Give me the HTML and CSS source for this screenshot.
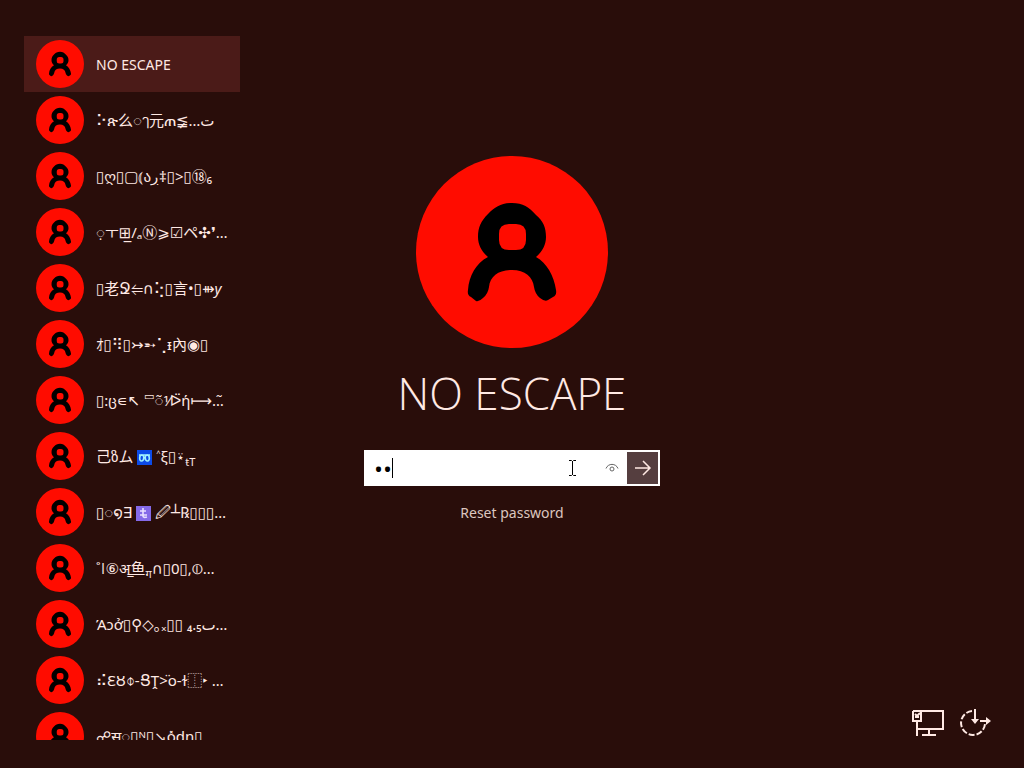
FILE: index.html
```html
<!DOCTYPE html>
<html lang="en">
<head>
    <meta charset="UTF-8">
    <meta name="viewport" content="width=device-width, initial-scale=1.0">
    <title>Sign in</title>
    <link rel="stylesheet" href="styles.css">
</head>
<body>
    <svg class="defs" aria-hidden="true">
        <symbol id="person" viewBox="0 0 192 192">
            <circle cx="96" cy="96" r="96" fill="#ff0c00"/>
            <path fill="#000" fill-rule="evenodd" d="M96 47C85 47 79 51 72 58C65 65 62 71 62 81C62 89 66 96 72 101C60 107 53 120 52 134Q51 139 55 141L60 145Q63 146 67 142Q72 138 73 131C74 120 83 114 96 114C109 114 117 121 118 131Q119 138 124 142Q129 146 132 144L137 141Q141 139 140 134C138 120 131 107 120 101C126 96 130 89 130 81C130 71 127 65 120 59C113 51 107 47 96 47ZM93 68H100Q110 68 110 78V84Q110 94 100 94H93Q83 94 83 84V78Q83 68 93 68Z"/>
        </symbol>
    </svg>

    <div class="screen">
        <nav class="users" aria-label="Users">
            <button class="user selected"><svg class="avatar"><use href="#person"/></svg><span class="name">NO ESCAPE</span></button>
            <button class="user"><svg class="avatar"><use href="#person"/></svg><span class="name glyphs">⠕ጽ么◌ๅ元ጠ≨…<bdi>ت</bdi></span></button>
            <button class="user"><svg class="avatar"><use href="#person"/></svg><span class="name glyphs">▯ღ▯▢⦅ა<bdi>ڔ</bdi>‡▯&gt;▯⑱₆</span></button>
            <button class="user"><svg class="avatar"><use href="#person"/></svg><span class="name glyphs">◌̣ㅜ⊞̲/ₐⓃ⩾☑ペ✣❜…</span></button>
            <button class="user"><svg class="avatar"><use href="#person"/></svg><span class="name glyphs">▯老Ջ⥢∩⢕▯言•▯⇻<i>y</i></span></button>
            <button class="user"><svg class="avatar"><use href="#person"/></svg><span class="name glyphs">ｵ▯⠻▯↣➵⢁ᵻ內◉▯</span></button>
            <button class="user"><svg class="avatar"><use href="#person"/></svg><span class="name glyphs">▯:ც∊↖ <sup>▭</sup>◌̃⅟ᐅ̈ή⟼…̃</span></button>
            <button class="user"><svg class="avatar"><use href="#person"/></svg><span class="name glyphs">己ზム <svg class="tile" viewBox="0 0 15 15"><path fill="#0c4be8" d="M0 0H15V15H0Z"/><path fill="none" stroke="#9ff1ff" stroke-width="1.6" d="M2 5H4.500C8 5 7 11 4.500 11C2 11 2 5 5 5H10C13 5 13 11 10.500 11C8 11 7 5 10.500 5H13"/></svg> ˄ξ▯⍣<sub>ŧT</sub></span></button>
            <button class="user"><svg class="avatar"><use href="#person"/></svg><span class="name glyphs">▯◌໑∃ <svg class="tile" viewBox="0 0 15 15"><path fill="#856ae8" d="M0 0H15V15H0Z"/><path fill="none" stroke="#e9e0ff" stroke-width="1.6" d="M7 2V10Q7 12 11 11M4 5H10M4 9H11"/></svg> 🖉┴℞▯▯▯…</span></button>
            <button class="user"><svg class="avatar"><use href="#person"/></svg><span class="name glyphs">˚ǀ⑥अ̳鱼<sub>ग</sub>∩▯0▯,⦶…</span></button>
            <button class="user"><svg class="avatar"><use href="#person"/></svg><span class="name glyphs">Άɔở▯⚲◇｡ₓ▯▯ ₄.₅<bdi>ٮ</bdi>…</span></button>
            <button class="user"><svg class="avatar"><use href="#person"/></svg><span class="name glyphs">⠮ƐȢ⌽-ՑṰ&gt;̈o-ɫ⿰‣ …</span></button>
            <button class="user"><svg class="avatar"><use href="#person"/></svg><span class="name glyphs">☍स◌▯ᴺ▯↘o̽dn▯</span></button>
        </nav>

        <main class="login">
            <svg class="portrait"><use href="#person"/></svg>
            <h1 class="title">NO ESCAPE</h1>
            <form class="password" onsubmit="return false">
                <span class="field">
                    <input class="input" type="password" value="no" aria-label="Password">
                    <span class="caret"></span>
                    <svg class="pointer" viewBox="0 0 9 18"><path d="M1 1.500H3.500L4.500 2.500L5.500 1.500H8M4.500 2V16M1 16.500H3.500L4.500 15.500L5.500 16.500H8"/></svg>
                </span>
                <button class="reveal" type="button" aria-label="Show password">
                    <svg viewBox="0 0 14 10"><path d="M1 5.500C3 0 11 0 13 5.500"/><circle cx="7" cy="6" r="2"/></svg>
                </button>
                <button class="submit" aria-label="Submit">
                    <svg viewBox="0 0 18 16"><path d="M1 8H16M9 1L16 8L9 15"/></svg>
                </button>
            </form>
            <a class="reset" href="#">Reset password</a>
        </main>

        <div class="tools">
            <button class="tool" aria-label="Network">
                <svg viewBox="0 0 32 32"><path d="M1 5H31V23H6M1 5V15H9V5M5 15V30M17 23V28M10 29H24"/><path d="M3 8L5 10L8 7M3 11H7"/></svg>
            </button>
            <button class="tool" aria-label="Ease of access">
                <svg viewBox="0 0 32 32"><path stroke-dasharray="6 2" d="M12 5A12 12 0 1 0 25 18"/><path d="M15 3V14M20 15H28"/><path class="solid" d="M11 13H19L15 18ZM26 11L31 15L26 19Z"/></svg>
            </button>
        </div>
    </div>
</body>
</html>
```
FILE: styles.css
```css
* {
    box-sizing: border-box;
}

body {
    margin: 0;
    background-color: #290d0a;
    color: #ffe9e4;
    font-family: "Noto Sans", "Open Sans", "DejaVu Sans", "Noto Sans CJK SC", "Noto Sans CJK KR", sans-serif;
    font-size: 14px;
}

button {
    border: none;
    padding: 0;
    background: none;
    color: inherit;
    font: inherit;
}

svg {
    display: block;
}

.defs {
    position: absolute;
    width: 0;
    height: 0;
}

.screen {
    display: grid;
    grid-template-columns: 216px 1fr 216px;
    height: 100vh;
    padding: 0 24px;
}

/* user list */
.users {
    display: flex;
    flex-direction: column;
    margin: 36px 0 28px;
    overflow: hidden;
}

.user {
    display: flex;
    flex: none;
    align-items: center;
    gap: 12px;
    height: 56px;
    padding: 0 12px;
    text-align: left;
}

.selected {
    background-color: #4b1b18;
}

.avatar {
    flex: none;
    width: 48px;
    height: 48px;
}

.name {
    padding-top: 2px;
    line-height: 20px;
    white-space: nowrap;
}

.glyphs {
    padding-top: 0;
    font-size: 15px;
}

.name sub,
.name sup {
    font-size: 11px;
    line-height: 0;
}

.tile {
    display: inline-block;
    width: 15px;
    height: 15px;
    vertical-align: middle;
}

/* sign-in column */
.login {
    display: flex;
    flex-direction: column;
    align-items: center;
    padding-top: 156px;
}

.portrait {
    width: 192px;
    height: 192px;
}

.title {
    margin: 13px 0 25px;
    font-family: "Open Sans", sans-serif;
    font-size: 44px;
    font-weight: 300;
    line-height: 64px;
    white-space: nowrap;
}

.password {
    display: flex;
    width: 296px;
    height: 36px;
    border: 2px solid #fff;
    background-color: #fff;
}

.field {
    position: relative;
    flex: 1;
    display: flex;
}

.input {
    width: 100%;
    border: none;
    outline: none;
    padding: 0 8px;
    background: none;
    color: #000;
    font-family: "Open Sans", sans-serif;
    font-size: 24px;
}

.caret {
    position: absolute;
    top: 6px;
    left: 26px;
    width: 1px;
    height: 20px;
    background-color: #000;
}

.pointer {
    position: absolute;
    top: 7px;
    right: 20px;
    width: 9px;
    height: 18px;
    fill: none;
    stroke: #000;
}

.reveal {
    display: flex;
    align-items: center;
    justify-content: center;
    width: 30px;
}

.reveal svg {
    width: 14px;
    height: 10px;
    fill: none;
    stroke: #666;
}

.submit {
    display: flex;
    align-items: center;
    justify-content: center;
    width: 31px;
    background-color: #553e3f;
}

.submit svg {
    width: 18px;
    height: 16px;
    fill: none;
    stroke: #ffe9e4;
    stroke-width: 1.5;
}

.reset {
    margin-top: 17px;
    color: #dcc5bf;
    line-height: 20px;
    text-decoration: none;
}

/* bottom right icons */
.tools {
    display: flex;
    align-items: flex-end;
    justify-content: flex-end;
    gap: 16px;
    padding: 0 8px 30px;
}

.tool svg {
    width: 32px;
    height: 32px;
    fill: none;
    stroke: #ffe9e4;
    stroke-width: 2;
}

.tool .solid {
    fill: #ffe9e4;
    stroke: none;
}
```
